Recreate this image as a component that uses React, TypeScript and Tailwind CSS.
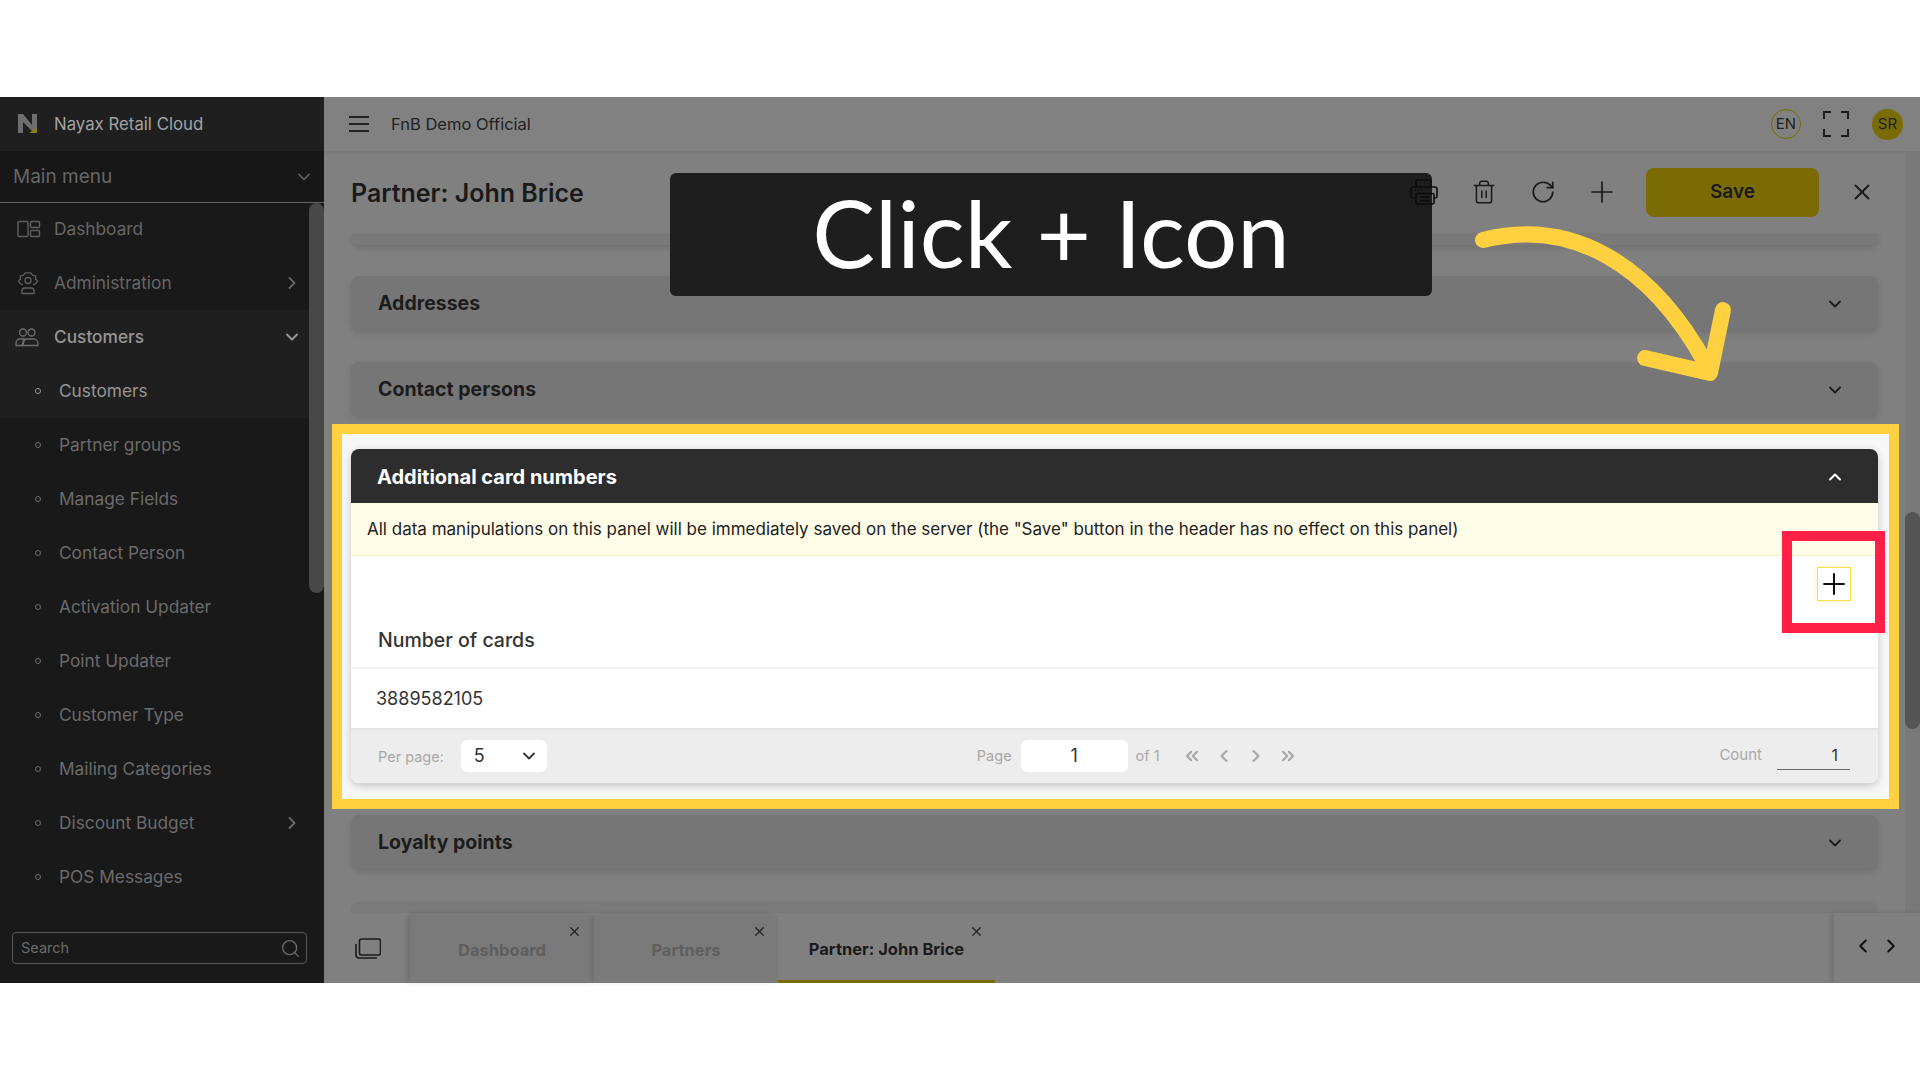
import { ChevronDown, ChevronLeft, ChevronRight, ChevronUp, ChevronsLeft, ChevronsRight, Plus, RotateCw, Search, Trash2, X } from "lucide-react";

const subItems = ["Partner groups", "Manage Fields", "Contact Person", "Activation Updater", "Point Updater", "Customer Type", "Mailing Categories"];

function DashboardIcon() {
    return (
        <svg width="24" height="18" viewBox="0 0 24 18" fill="none" stroke="#5f5f5f" strokeWidth="1.4">
            <rect x="1" y="1.5" width="10" height="15" rx="1" />
            <rect x="13.5" y="1.5" width="9" height="6" rx="1" />
            <rect x="13.5" y="10.5" width="9" height="6" rx="1" />
        </svg>
    );
}

function AdminIcon() {
    return (
        <svg width="24" height="24" viewBox="0 0 24 24" fill="none" stroke="#5f5f5f" strokeWidth="1.3">
            <circle cx="12" cy="9.5" r="3" />
            <path d="M7 13.5 4.5 13l-2-3 2-2-.3-3 3-.6L9.5 1.8h5l2.300 2.600 3 .6-.3 3 2 2-2 3-2.500.5" />
            <path d="M6 22.500v-2.500a3 3 0 0 1 3-3h6a3 3 0 0 1 3 3v2.500z" />
        </svg>
    );
}

function UsersIcon() {
    return (
        <svg width="24" height="20" viewBox="0 0 24 20" fill="none" stroke="#6f6f6f" strokeWidth="1.3">
            <circle cx="8" cy="5.500" r="3.500" />
            <circle cx="16.500" cy="5.500" r="3.500" />
            <path d="M1 18.500v-2.500a4 4 0 0 1 4-4h4l-2 6.500z" />
            <path d="M7.500 18.500 9 14.500a3 3 0 0 1 3-2.500h6a4.500 4.500 0 0 1 5 4.500v2z" />
        </svg>
    );
}

function PrinterIcon() {
    return (
        <svg className="relative z-10" width="28" height="26" viewBox="0 0 28 26" fill="none" stroke="#0c0c0c" strokeWidth="1.6" strokeLinejoin="round">
            <path d="M6 8V3a2 2 0 0 1 2-2h11a2 2 0 0 1 2 2v5" />
            <path d="M6 19H3a2 2 0 0 1-2-2V10a2 2 0 0 1 2-2h22a2 2 0 0 1 2 2v7a2 2 0 0 1-2 2h-1" />
            <rect x="6" y="14.500" width="18" height="10.500" rx="1.500" />
            <path d="M10 18h10M10 21.500h10" />
            <path d="M5 11h1M8 11h1M11 11h1" />
        </svg>
    );
}

function Accordion({ title }: { title: string }) {
    return (
        <div className="flex h-[54px] items-center justify-between rounded-lg bg-[#767676] pl-[27px] pr-[33px] pt-[1px] shadow-[0_3px_6px_rgba(0,0,0,0.12)]">
            <span className="text-[19.5px] font-bold text-[#1c1c1c]">{title}</span>
            <ChevronDown size={20} strokeWidth={2.2} className="text-[#1c1c1c]" />
        </div>
    );
}

function SideRow({ label, active }: { label: string; active?: boolean }) {
    return (
        <div className={`flex h-[54px] shrink-0 items-center pl-[35px] ${active ? "bg-[#1f1f1f] text-[#969696]" : "text-[#6b6b6b]"}`}>
            <span className="h-[6px] w-[6px] rounded-full border border-current" />
            <span className="ml-[18px] text-[17.3px]">{label}</span>
        </div>
    );
}

export default function App() {
    return (
        <div className="relative flex h-[1080px] w-[1920px] flex-col overflow-hidden bg-white font-['Inter',sans-serif]">
            <div className="h-[97px] shrink-0 bg-white" />

            <div className="flex h-[886px] shrink-0">
                {/* sidebar */}
                <aside className="flex w-[324px] shrink-0 flex-col bg-[#191919]">
                    <div className="flex h-[54px] shrink-0 items-center bg-[#1f1f1f] pl-[18px]">
                        <svg width="20" height="20" viewBox="0 0 20 20">
                            <path d="M0 0h5l9 11V0h5v19h-3L5 8v11H0z" fill="#6e6e6e" />
                            <path d="M19 14v5H11z" fill="#8f7d10" />
                        </svg>
                        <span className="ml-[16px] pt-[1px] text-[16.8px] text-[#a3a3a3]">Nayax Retail Cloud</span>
                    </div>
                    <div className="flex h-[52px] shrink-0 items-center justify-between border-b border-[#666] bg-[#171717] pl-[13px] pr-[10px]">
                        <span className="pt-[2px] text-[19px] text-[#666]">Main menu</span>
                        <ChevronDown size={20} className="text-[#666]" />
                    </div>
                    <div className="flex min-h-0 flex-1 overflow-hidden">
                        <nav className="-mt-px w-[309px] shrink-0">
                            <div className="flex h-[54px] items-center pl-[17px] text-[#666]">
                                <DashboardIcon />
                                <span className="ml-[13px] text-[17.3px]">Dashboard</span>
                            </div>
                            <div className="flex h-[54px] items-center pl-[16px] pr-[7px] text-[#666]">
                                <AdminIcon />
                                <span className="ml-[14px] flex-1 text-[17.3px]">Administration</span>
                                <ChevronRight size={20} strokeWidth={2.2} />
                            </div>
                            <div className="flex h-[54px] items-center bg-[#1f1f1f] pl-[15px] pr-[7px] text-[#969696]">
                                <UsersIcon />
                                <span className="ml-[15px] flex-1 text-[17.3px] font-medium">Customers</span>
                                <ChevronDown size={20} strokeWidth={2.4} />
                            </div>
                            <SideRow label="Customers" active />
                            {subItems.map((item) => (
                                <SideRow key={item} label={item} />
                            ))}
                            <div className="flex h-[54px] items-center pl-[35px] pr-[7px] text-[#6b6b6b]">
                                <span className="h-[6px] w-[6px] rounded-full border border-current" />
                                <span className="ml-[18px] flex-1 text-[17.3px]">Discount Budget</span>
                                <ChevronRight size={20} strokeWidth={2.2} />
                            </div>
                            <SideRow label="POS Messages" />
                        </nav>
                        <div className="flex-1">
                            <div className="h-[390px] rounded-lg bg-[#484848]" />
                        </div>
                    </div>
                    <div className="flex h-[56px] shrink-0 items-start bg-[#191919] pl-[12px] pr-[17px] pt-[5px]">
                        <div className="flex h-[32px] w-full items-center justify-between rounded border border-[#565656] pl-[8px] pr-[5px]">
                            <span className="text-[14.5px] text-[#6b6b6b]">Search</span>
                            <Search size={21} strokeWidth={1.5} className="text-[#6b6b6b]" />
                        </div>
                    </div>
                </aside>

                {/* main */}
                <main className="flex min-w-0 flex-1 flex-col bg-[#808080]">
                    <header className="flex h-[54px] shrink-0 items-center bg-[#818181] pl-[25px] pr-[17px] shadow-[0_2px_3px_rgba(0,0,0,0.06)]">
                        <div className="flex w-[20px] flex-col gap-[5px]">
                            <span className="h-[2px] bg-[#222]" />
                            <span className="h-[2px] bg-[#222]" />
                            <span className="h-[2px] bg-[#222]" />
                        </div>
                        <span className="ml-[22px] flex-1 text-[16.5px] text-[#222]">FnB Demo Official</span>
                        <div className="flex h-[30px] w-[30px] items-center justify-center rounded-full border border-[#7a6b05] text-[15px] text-[#222]">EN</div>
                        <svg className="ml-[22px]" width="26" height="26" viewBox="0 0 26 26" fill="none" stroke="#1c1c1c" strokeWidth="2">
                            <path d="M1 8V1h7M18 1h7v7M25 18v7h-7M8 25H1v-7" />
                        </svg>
                        <div className="ml-[23px] flex h-[31px] w-[31px] items-center justify-center rounded-full bg-[#7a6b05] text-[15px] text-[#222]">SR</div>
                    </header>

                    <div className="flex min-h-0 flex-1">
                        <div className="min-w-0 flex-1 overflow-hidden px-[27px]">
                            <div className="flex h-[82px] items-center pr-[3px]">
                                <h1 className="flex-1 pt-[3px] text-[25px] font-semibold text-[#1a1a1a]">Partner: John Brice</h1>
                                <PrinterIcon />
                                <Trash2 size={26} strokeWidth={1.4} className="ml-[33px] text-[#1a1a1a]" />
                                <RotateCw size={26} strokeWidth={1.6} className="ml-[33px] text-[#1a1a1a]" />
                                <Plus size={34} strokeWidth={1.2} className="ml-[29px] text-[#1a1a1a]" />
                                <button className="ml-[27px] h-[49px] w-[173px] rounded-lg bg-[#7a6b05] text-[19px] font-semibold text-[#1a1a1a]">Save</button>
                                <X size={26} strokeWidth={1.8} className="ml-[30px] text-[#1a1a1a]" />
                            </div>
                            <div className="h-[12px] rounded-b-lg bg-[#7a7a7a] shadow-[0_3px_6px_rgba(0,0,0,0.12)]" />
                            <div className="mt-[31px]">
                                <Accordion title="Addresses" />
                            </div>
                            <div className="mt-[32px]">
                                <Accordion title="Contact persons" />
                            </div>

                            {/* highlighted panel */}
                            <div className="relative -ml-[19px] -mr-[21px] mt-[8px] border-[10px] border-[#ffd040] bg-[#f7f7f7] pb-[16px] pl-[9px] pr-[11px] pt-[15px]">
                                <section className="overflow-hidden rounded-lg bg-white shadow-[0_3px_8px_rgba(0,0,0,0.2)]">
                                    <div className="flex h-[54px] items-center justify-between bg-[#2d2d2d] pl-[26px] pr-[33px] pt-[1px]">
                                        <span className="text-[20px] font-bold text-white">Additional card numbers</span>
                                        <ChevronUp size={20} strokeWidth={2.4} className="text-white" />
                                    </div>
                                    <div className="flex h-[53px] items-center border-b border-[#f5f1cf] bg-[#fffce8] pl-[16px] pt-[2px] text-[17px] text-[#222]">
                                        All data manipulations on this panel will be immediately saved on the server (the "Save" button in the header has no effect on this panel)
                                    </div>
                                    <div className="flex h-[113px] flex-col">
                                        <div className="flex justify-end pr-[27px] pt-[11px]">
                                            <button className="flex h-[34px] w-[34px] items-center justify-center border border-[#f3e04c] bg-white shadow-[0_0_6px_rgba(245,224,80,0.5)]">
                                                <Plus size={34} strokeWidth={1.4} className="shrink-0 text-[#111]" />
                                            </button>
                                        </div>
                                        <div className="mt-auto flex h-[50px] items-center border-b-2 border-[#f1f1f1] pb-[4px] pl-[27px] text-[19.5px] font-medium text-[#333]">
                                            Number of cards
                                        </div>
                                    </div>
                                    <div className="flex h-[59px] items-center pl-[25px] text-lg text-[#333]">3889582105</div>
                                    <div className="flex h-[55px] items-center border-t-2 border-[#e4e4e4] bg-[#ededed] pb-[2px] text-[14.5px] text-[#a8a8a8]">
                                        <span className="ml-[27px] pt-[2px]">Per page:</span>
                                        <div className="ml-[17px] flex h-[32px] w-[86px] items-center justify-between rounded-md bg-white pl-[13px] pr-[8px] text-lg text-[#333]">
                                            5
                                            <ChevronDown size={20} strokeWidth={2.2} />
                                        </div>
                                        <span className="ml-[430px]">Page</span>
                                        <div className="ml-[9px] flex h-[32px] w-[107px] items-center justify-center rounded-md bg-white text-lg text-[#333]">1</div>
                                        <span className="ml-[8px] w-[46px]">of 1</span>
                                        <div className="flex items-center gap-[12px] text-[#a8a8a8]">
                                            <ChevronsLeft size={20} strokeWidth={2.6} />
                                            <ChevronLeft size={20} strokeWidth={2.6} />
                                            <ChevronRight size={20} strokeWidth={2.6} />
                                            <ChevronsRight size={20} strokeWidth={2.6} />
                                        </div>
                                        <span className="ml-auto text-[15px]">Count</span>
                                        <div className="ml-[15px] mr-[28px] flex h-[28px] w-[73px] items-center justify-end border-b border-[#666] pr-[12px] text-base text-[#333]">1</div>
                                    </div>
                                </section>
                                {/* red marker round the + button */}
                                <div className="absolute right-[4px] top-[97px] h-[102px] w-[103px] border-[10px] border-[#ff1f47]" />
                            </div>

                            <div className="mt-[6px]">
                                <Accordion title="Loyalty points" />
                            </div>
                            <div className="mt-[33px] h-[20px] rounded-t-lg bg-[#7a7a7a]" />
                        </div>
                        <div className="w-[15px] shrink-0 bg-[#797979] pt-[361px]">
                            <div className="h-[217px] rounded-lg bg-[#555]" />
                        </div>
                    </div>

                    {/* tab strip */}
                    <div className="flex h-[70px] shrink-0 bg-[#808080]">
                        <div className="flex w-[86px] items-center pl-[31px]">
                            <svg width="26" height="26" viewBox="0 0 26 26" fill="none" stroke="#1a1a1a" strokeWidth="1.6">
                                <rect x="4.500" y="4" width="21" height="16" rx="2" />
                                <path d="M1 9v11a3 3 0 0 0 3 3h18" />
                            </svg>
                        </div>
                        <div className="relative flex w-[184px] items-center justify-center rounded-t-lg bg-[#7a7a7a] pt-[4px] text-[16.5px] font-bold text-[#5e5e5e] shadow-[-3px_0_5px_rgba(0,0,0,0.12)]">
                            Dashboard
                            <X size={15} className="absolute right-[12px] top-[11px] text-[#222]" />
                        </div>
                        <div className="relative flex w-[184px] items-center justify-center rounded-t-lg bg-[#7a7a7a] pt-[4px] text-[16.5px] font-bold text-[#5e5e5e] shadow-[-3px_0_5px_rgba(0,0,0,0.08)]">
                            Partners
                            <X size={15} className="absolute right-[11px] top-[11px] text-[#222]" />
                        </div>
                        <div className="relative flex w-[217px] items-center justify-center rounded-t-lg border-b-[3px] border-[#7a6b05] bg-[#808080] pt-[6px] text-[16.5px] font-bold text-[#1a1a1a]">
                            Partner: John Brice
                            <X size={15} className="absolute right-[11px] top-[11px] text-[#222]" />
                        </div>
                        <div className="ml-auto flex w-[86px] items-center justify-center gap-[6px] pb-[4px] text-[#111] shadow-[-3px_0_5px_rgba(0,0,0,0.12)]">
                            <ChevronLeft size={22} strokeWidth={2.2} />
                            <ChevronRight size={22} strokeWidth={2.2} />
                        </div>
                    </div>
                </main>
            </div>

            <div className="flex-1 bg-white" />

            {/* tutorial callout */}
            <div className="absolute left-[670px] top-[173px] flex h-[123px] w-[762px] items-center justify-center rounded-md bg-[#1e1e1e] pb-[6px] font-['Lato',sans-serif] text-[94px] leading-none text-white">
                Click + Icon
            </div>
            <svg className="absolute left-[1460px] top-[215px]" width="280" height="175" viewBox="1460 215 280 175" fill="none" stroke="#ffd040" strokeWidth="16" strokeLinecap="round" strokeLinejoin="round">
                <path d="M1483 240C1570 218 1650 262 1706 364" />
                <path d="M1723 310 1710 373 1645 358" />
            </svg>
        </div>
    );
}
